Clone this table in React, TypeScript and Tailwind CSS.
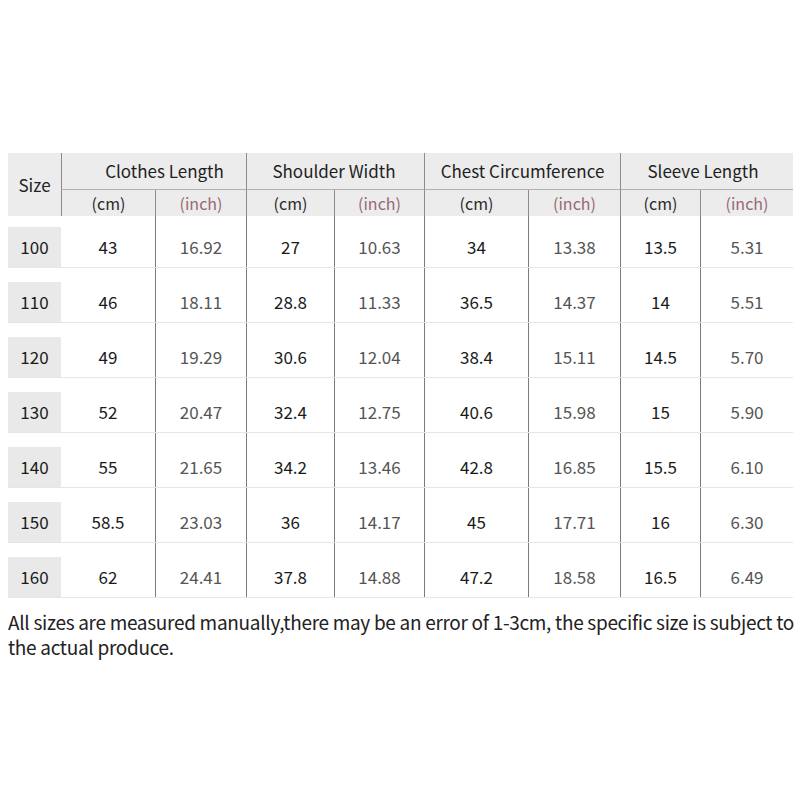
const font = { fontFamily: '"Noto Sans CJK SC", "Noto Sans", sans-serif' };

const groups = [
  { label: 'Clothes Length', pad: 'pl-[21px]' },
  { label: 'Shoulder Width', pad: 'pr-[3px]' },
  { label: 'Chest Circumference', pad: '' },
  { label: 'Sleeve Length', pad: 'pr-[8px]' },
];

const rows: string[][] = [
  ['100', '43', '16.92', '27', '10.63', '34', '13.38', '13.5', '5.31'],
  ['110', '46', '18.11', '28.8', '11.33', '36.5', '14.37', '14', '5.51'],
  ['120', '49', '19.29', '30.6', '12.04', '38.4', '15.11', '14.5', '5.70'],
  ['130', '52', '20.47', '32.4', '12.75', '40.6', '15.98', '15', '5.90'],
  ['140', '55', '21.65', '34.2', '13.46', '42.8', '16.85', '15.5', '6.10'],
  ['150', '58.5', '23.03', '36', '14.17', '45', '17.71', '16', '6.30'],
  ['160', '62', '24.41', '37.8', '14.88', '47.2', '18.58', '16.5', '6.49'],
];

const cols = 'grid grid-cols-[53px_94px_91px_88px_90px_104px_92px_80px_93px]';

export default function App() {
  return (
    <div className="w-[800px] h-[800px] bg-white pt-[153px] pl-[8px]" style={font}>
      <div className="w-[785px]">
        {/* header */}
        <div className={`${cols} grid-rows-[37px_26px] bg-[#ececec]`}>
          <div className="row-span-2 flex items-center justify-center text-[17px] text-[#222]">Size</div>
          {groups.map((g) => (
            <div
              key={g.label}
              className={`col-span-2 flex items-center justify-center border-l-[1.5px] border-b-[1.5px] border-l-[#8c8c8c] border-b-[#b0b0b0] text-[17px] text-[#1e1e1e] ${g.pad}`}
            >
              {g.label}
            </div>
          ))}
          {groups.map((g) => (
            <div key={g.label} className="contents">
              <div className="flex items-center justify-center border-l-[1.5px] border-[#8c8c8c] text-[16px] text-[#2a2a2a]">
                (cm)
              </div>
              <div className="flex items-center justify-center border-l-[1.5px] border-[#8c8c8c] text-[16px] text-[#9a6874]">
                (inch)
              </div>
            </div>
          ))}
        </div>

        {/* body */}
        {rows.map((r, i) => (
          <div key={r[0]} className={`${cols} border-b border-[#e6e6e6]`}>
            {r.map((v, j) => (
              <div
                key={j}
                className={`${i === 0 ? 'pt-[11px]' : 'pt-[14px]'} ${
                  j >= 2 ? 'border-l-[1.5px] border-[#7c7c7c]' : ''
                }`}
              >
                <div
                  className={`h-[40px] flex items-center justify-center text-[17px] ${
                    j === 0 ? 'bg-[#e9e9e9] text-[#1a1a1a]' : j % 2 === 0 ? 'text-[#555]' : 'text-[#1a1a1a]'
                  }`}
                >
                  {v}
                </div>
              </div>
            ))}
          </div>
        ))}

        <p className="mt-[11px] text-[19px] leading-[25px] text-[#222] tracking-[-0.3px] whitespace-nowrap">
          All sizes are measured manually,there may be an error of 1-3cm, the specific size is subject to
        </p>
        <p className="text-[19px] leading-[25px] text-[#222] tracking-[-0.3px]">the actual produce.</p>
      </div>
    </div>
  );
}
